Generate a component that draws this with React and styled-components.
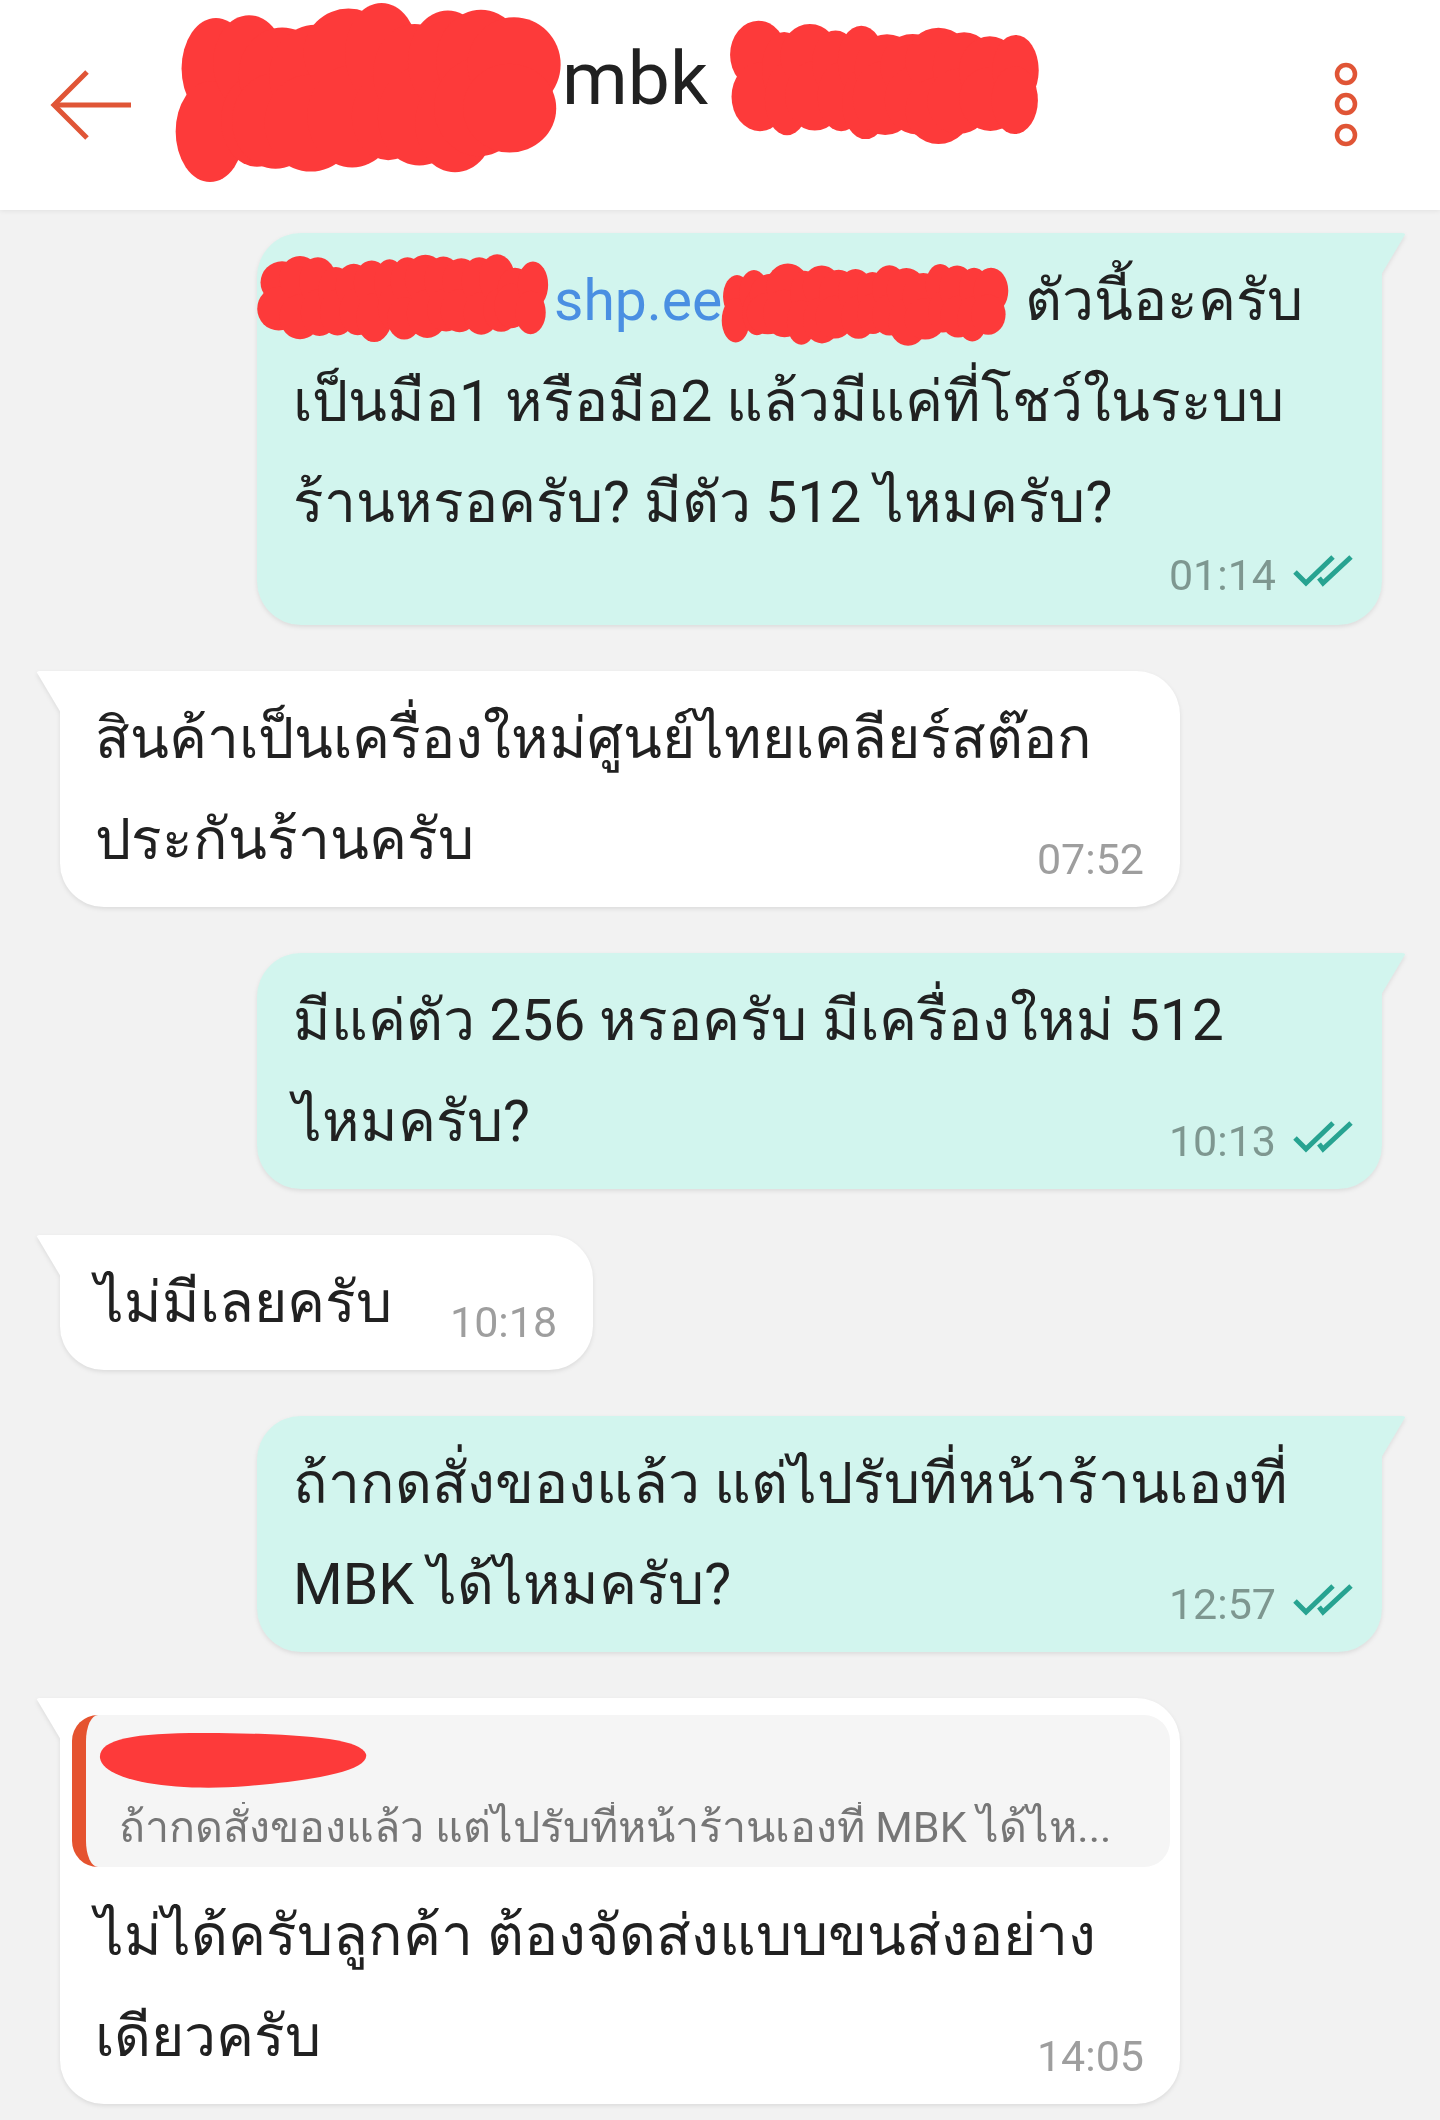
import React from 'react';
import styled, { createGlobalStyle, css } from 'styled-components';

const GlobalStyle = createGlobalStyle`
  html, body { margin: 0; padding: 0; }
  body {
    background: #f2f2f2;
    font-family: Roboto, sans-serif;
    color: #212121;
  }
`;

function rng(seed) {
  let s = seed * 9973 + 17;
  return () => {
    s = (s * 16807) % 2147483647;
    return (s - 1) / 2147483646;
  };
}

const Scribble = ({ w, h, seed = 1, className }) => {
  const r = rng(seed);
  const items = [];
  const n = Math.max(4, Math.round(w / (h * 0.26)));
  for (let i = 0; i <= n; i++) {
    const cx = h * 0.26 + ((w - h * 0.52) * i) / n;
    const rx = h * 0.18 + r() * h * 0.1;
    items.push(
      <ellipse key={`t${i}`} cx={cx} cy={h * 0.33 + (r() - 0.5) * h * 0.16} rx={rx} ry={h * 0.26 + r() * h * 0.05} />
    );
    items.push(
      <ellipse key={`b${i}`} cx={cx + (r() - 0.5) * h * 0.1} cy={h * 0.67 + (r() - 0.5) * h * 0.16} rx={rx} ry={h * 0.26 + r() * h * 0.05} />
    );
  }
  return (
    <svg className={className} width={w} height={h} viewBox={`0 0 ${w} ${h}`} overflow="visible">
      <g fill="#fd3a3a">
        <rect x={h * 0.2} y={h * 0.25} width={w - h * 0.4} height={h * 0.5} />
        {items}
      </g>
    </svg>
  );
};

const NameBlobBase = ({ className }) => (
  <svg className={className} width="270" height="60" viewBox="0 0 270 60">
    <path
      d="M2 28 C0 8 40 2 120 3 C200 4 262 8 268 24 C272 40 220 50 150 56 C80 62 6 52 2 28 Z"
      fill="#fd3a3a"
    />
  </svg>
);

const Page = styled.div`
  width: 1440px;
  min-height: 2120px;
  background: #f2f2f2;
`;

const Header = styled.header`
  position: relative;
  z-index: 1;
  box-sizing: border-box;
  height: 210px;
  display: flex;
  align-items: flex-start;
  padding: 0 79px 0 50px;
  background: #ffffff;
  box-shadow: 0 1px 5px rgba(0, 0, 0, 0.07);
`;

const BackIcon = styled.svg`
  flex: none;
  margin-top: 66px;
`;

const Title = styled.div`
  flex: 1;
  display: flex;
  align-items: flex-start;
  margin-left: 38px;
`;

const HeaderBlob = styled(Scribble)`
  flex: none;
  margin-top: ${(p) => p.$mt}px;
  margin-left: ${(p) => p.$ml || 0}px;
`;

const TitleText = styled.span`
  margin-top: 34px;
  margin-left: 4px;
  font-size: 75px;
  line-height: 88px;
  color: #212121;
`;

const MenuIcon = styled.svg`
  flex: none;
  margin-top: 60px;
`;

const ChatList = styled.main`
  display: flex;
  flex-direction: column;
  gap: 46px;
  padding: 23px 58px 40px 60px;
`;

const Row = styled.div`
  display: flex;
  justify-content: ${(p) => (p.$out ? 'flex-end' : 'flex-start')};
`;

const Bubble = styled.div`
  position: relative;
  box-sizing: border-box;
  background: ${(p) => (p.$out ? '#d2f5ee' : '#ffffff')};
  border-radius: ${(p) => (p.$out ? '44px 0 44px 44px' : '0 44px 44px 44px')};
  padding: ${(p) => (p.$out ? '17px 29px 17px 36px' : '17px 36px 17px 35px')};
  width: ${(p) => (p.$wide ? (p.$out ? '1125px' : '1120px') : 'auto')};
  filter: drop-shadow(0 2px 2px rgba(0, 0, 0, 0.09));

  &::before {
    content: '';
    position: absolute;
    top: 0;
    width: 25px;
    height: 42px;
    background: inherit;
    ${(p) =>
      p.$out
        ? css`
            right: -24px;
            border-top-right-radius: 4px;
            clip-path: polygon(0 0, 100% 0, 0 100%);
          `
        : css`
            left: -24px;
            border-top-left-radius: 4px;
            clip-path: polygon(0 0, 100% 0, 100% 100%);
          `}
  }
`;

const Text = styled.div`
  display: flow-root;
  font-size: 57px;
  line-height: 101px;
  color: #212121;
  white-space: nowrap;
`;

const Link = styled.span`
  color: #4a8fe2;
`;

const InlineBlob = styled(Scribble)`
  display: inline-block;
  vertical-align: ${(p) => p.$va}px;
  margin-left: ${(p) => p.$ml || 0}px;
`;

const Meta = styled.span`
  display: flex;
  align-items: center;
  gap: 17px;
  font-size: 43px;
  line-height: 50px;
  color: ${(p) => (p.$out ? '#7e9790' : '#9e9e9e')};
  ${(p) =>
    p.$below
      ? css`
          justify-content: flex-end;
          margin: -3px 0 8px;
        `
      : css`
          float: right;
          margin: 45px 0 0 58px;
        `}
`;

const TickIcon = styled.svg`
  flex: none;
  margin-bottom: 8px;
`;

const Quote = styled.div`
  margin: 0 -26px 18px -23px;
  padding: 15px 20px 15px 33px;
  background: #f5f5f5;
  border-left: 14px solid #e5532f;
  border-radius: 26px;
`;

const NameBlob = styled(NameBlobBase)`
  display: block;
  margin-left: -21px;
`;

const QuoteText = styled.div`
  margin-top: 12px;
  font-size: 43px;
  line-height: 50px;
  color: #767676;
  white-space: nowrap;
  overflow: hidden;
`;

const Ticks = () => (
  <TickIcon width="60" height="32" viewBox="0 0 60 32" fill="none" stroke="#27a391" strokeWidth="5">
    <path d="M2 17 L13 28 L40 2" />
    <path d="M26 23 L30 28 L58 2" />
  </TickIcon>
);

const Time = ({ out, below, children }) => (
  <Meta $out={out} $below={below}>
    <span>{children}</span>
    {out && <Ticks />}
  </Meta>
);

export default function App() {
  return (
    <Page>
      <GlobalStyle />
      <Header>
        <BackIcon width="84" height="76" viewBox="0 0 84 76" fill="none" stroke="#e05536" strokeWidth="5">
          <path d="M37 6 L4 39 L37 72" />
          <path d="M4 39 L81 39" />
        </BackIcon>
        <Title>
          <HeaderBlob w={386} h={169} seed={3} $mt={7} />
          <TitleText>mbk</TitleText>
          <HeaderBlob w={320} h={121} seed={7} $mt={24} $ml={19} />
        </Title>
        <MenuIcon width="30" height="90" viewBox="0 0 30 90" fill="none" stroke="#e05536" strokeWidth="4.5">
          <circle cx="15" cy="14" r="9" />
          <circle cx="15" cy="44" r="9" />
          <circle cx="15" cy="75" r="9" />
        </MenuIcon>
      </Header>

      <ChatList>
        <Row $out>
          <Bubble $out $wide>
            <Text>
              <InlineBlob w={293} h={81} seed={11} $va={-19} $ml={-32} />
              <Link>shp.ee</Link>
              <InlineBlob w={294} h={77} seed={13} $va={-22} $ml={-5} /> ตัวนี้อะครับ
              <br />
              เป็นมือ1 หรือมือ2 แล้วมีแค่ที่โชว์ในระบบ
              <br />
              ร้านหรอครับ? มีตัว 512 ไหมครับ?
              <Time out below>01:14</Time>
            </Text>
          </Bubble>
        </Row>

        <Row>
          <Bubble $wide>
            <Text>
              สินค้าเป็นเครื่องใหม่ศูนย์ไทยเคลียร์สต๊อก
              <br />
              ประกันร้านครับ
              <Time>07:52</Time>
            </Text>
          </Bubble>
        </Row>

        <Row $out>
          <Bubble $out $wide>
            <Text>
              มีแค่ตัว 256 หรอครับ มีเครื่องใหม่ 512
              <br />
              ไหมครับ?
              <Time out>10:13</Time>
            </Text>
          </Bubble>
        </Row>

        <Row>
          <Bubble>
            <Text>
              ไม่มีเลยครับ
              <Time>10:18</Time>
            </Text>
          </Bubble>
        </Row>

        <Row $out>
          <Bubble $out $wide>
            <Text>
              ถ้ากดสั่งของแล้ว แต่ไปรับที่หน้าร้านเองที่
              <br />
              MBK ได้ไหมครับ?
              <Time out>12:57</Time>
            </Text>
          </Bubble>
        </Row>

        <Row>
          <Bubble $wide>
            <Quote>
              <NameBlob />
              <QuoteText>ถ้ากดสั่งของแล้ว แต่ไปรับที่หน้าร้านเองที่ MBK ได้ไห...</QuoteText>
            </Quote>
            <Text>
              ไม่ได้ครับลูกค้า ต้องจัดส่งแบบขนส่งอย่าง
              <br />
              เดียวครับ
              <Time>14:05</Time>
            </Text>
          </Bubble>
        </Row>
      </ChatList>
    </Page>
  );
}
